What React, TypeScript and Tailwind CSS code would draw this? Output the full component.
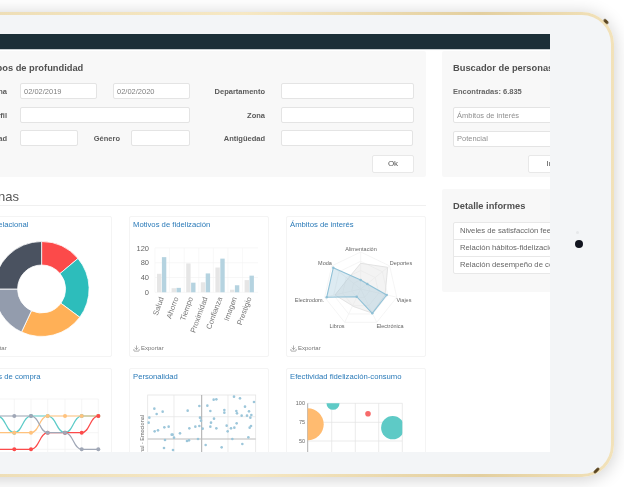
import React from 'react';
import { Download } from 'lucide-react';

const TEAL = '#2dbdbb';
const ORANGE = '#ffb057';
const RED = '#fc4a4a';
const SLATE = '#939cad';

const donut = [
  { from: 0, to: 50, color: RED },
  { from: 50, to: 126.5, color: TEAL },
  { from: 126.5, to: 205, color: ORANGE },
  { from: 205, to: 270, color: SLATE },
  { from: 270, to: 360, color: '#4a5260' },
];

const bars = [
  { name: 'Salud', a: 50, b: 95 },
  { name: 'Ahorro', a: 11, b: 12 },
  { name: 'Tiempo', a: 78, b: 26 },
  { name: 'Proximidad', a: 27, b: 51 },
  { name: 'Confianza', a: 67, b: 91 },
  { name: 'Imagen', a: 7, b: 19 },
  { name: 'Prestigio', a: 33, b: 45 },
];

const radarLabels = [
  { name: 'Alimentación', x: 361, y: 251 },
  { name: 'Deportes', x: 401, y: 265 },
  { name: 'Viajes', x: 404, y: 302 },
  { name: 'Electrónica', x: 390, y: 327.5 },
  { name: 'Libros', x: 337, y: 327.5 },
  { name: 'Electrodom.', x: 309.5, y: 302 },
  { name: 'Moda', x: 325, y: 265 },
];

const radarBlue = [[360.7, 280], [367.3, 284], [386.7, 295], [372.3, 313.3], [356.7, 296.7], [326.7, 297.3], [333.3, 267.7]];
const radarGrey = [[360.7, 263.3], [387.7, 267.3], [385, 295], [372, 313], [354, 306.7], [335, 295], [348.3, 278.3]];

const lineX = [-19.4, -2.7, 14.3, 31, 47.7, 65, 81.7, 98.3];
const LEVEL = [416, 432.7, 449.3];
const lines = [
  { color: '#5ccbc8', levels: [0, 0, 1, 0, 0, 1, 0, 0] },
  { color: '#ffc27d', levels: [1, 1, 1, 1, 0, 0, 0, 0] },
  { color: RED, levels: [2, 2, 2, 2, 1, 1, 1, 0] },
  { color: '#a0a7b6', levels: [0, 0, 0, 0, 1, 1, 2, 2] },
];

const scatter = [
  [88, 146], [95, 162], [113, 155], [73, 173], [71, 188], [89, 214], [99, 211], [118, 202], [131, 200], [140, 224],
  [143, 224], [147, 233], [165, 220], [120, 240], [117, 264], [144, 270], [188, 152], [223, 138], [247, 137], [266, 119],
  [274, 118], [256, 153], [298, 150], [298, 158], [327, 110], [345, 115], [360, 140], [334, 153], [336, 160], [372, 154],
  [379, 165], [376, 173], [366, 167], [350, 167], [387, 126], [225, 173], [228, 182], [267, 176], [258, 188], [256, 200],
  [274, 205], [305, 197], [318, 205], [328, 203], [335, 190], [308, 214], [378, 198], [374, 203], [211, 200], [223, 198],
  [193, 205], [233, 206], [186, 243], [192, 241], [219, 237], [242, 255], [290, 262], [322, 237], [352, 252], [370, 232],
];

const informes = [
  'Niveles de satisfacción feedback',
  'Relación hábitos-fidelización',
  'Relación desempeño de consumo',
];

function polar(cx: number, cy: number, r: number, deg: number) {
  const a = (deg * Math.PI) / 180;
  return [cx + r * Math.sin(a), cy - r * Math.cos(a)];
}

function slice(from: number, to: number) {
  const [x1, y1] = polar(41.6, 289, 47.5, from);
  const [x2, y2] = polar(41.6, 289, 47.5, to);
  const [x3, y3] = polar(41.6, 289, 24, to);
  const [x4, y4] = polar(41.6, 289, 24, from);
  const big = to - from > 180 ? 1 : 0;
  return `M${x1} ${y1}A47.5 47.5 0 ${big} 1 ${x2} ${y2}L${x3} ${y3}A24 24 0 ${big} 0 ${x4} ${y4}Z`;
}

function smooth(levels: number[]) {
  let d = `M${lineX[0]} ${LEVEL[levels[0]]}`;
  for (let i = 1; i < levels.length; i++) {
    const mid = (lineX[i - 1] + lineX[i]) / 2;
    d += `C${mid} ${LEVEL[levels[i - 1]]} ${mid} ${LEVEL[levels[i]]} ${lineX[i]} ${LEVEL[levels[i]]}`;
  }
  return d;
}

const toPoints = (list: number[][]) => list.map((p) => p.join(',')).join(' ');

const Field = ({ w, value, placeholder }: { w: string; value?: string; placeholder?: string }) => (
  <input
    readOnly
    value={value}
    placeholder={placeholder}
    className={`${w} block h-[16px] shrink-0 rounded-[2px] border border-[#e4e4e4] bg-white px-[3px] text-[7.5px] text-[#808080] outline-none placeholder:text-[#909090]`}
  />
);

const Label = ({ w, children }: { w: string; children: React.ReactNode }) => (
  <span className={`${w} mt-[2px] shrink-0 text-right text-[7.5px] font-bold text-[#5a5a5a]`}>{children}</span>
);

const Card = ({ title, left, children }: { title: string; left?: boolean; children: React.ReactNode }) => (
  <div className={`flex h-[141px] flex-col rounded-[2px] border border-[#f4f4f4] bg-white ${left ? 'pl-[15px]' : 'pl-[3px]'}`}>
    <h3 className="mt-[3px] text-[7.7px] leading-[10px] text-[#2a7ab8]">{title}</h3>
    {children}
    <div className="mt-auto mb-[4px] flex items-center gap-[1px] text-[6px] leading-[8px] text-[#777]">
      <Download size={7} strokeWidth={2} />
      Exportar
    </div>
  </div>
);

// el viewBox usa las coordenadas de la tarjeta, la altura es siempre 114
const ChartBox = ({ x, y, w, children }: { x: number; y: number; w: number; children: React.ReactNode }) => (
  <svg
    viewBox={`${x} ${y} ${w} 114`}
    width={w}
    height={114}
    className="block shrink-0 overflow-hidden"
    style={{ fontFamily: '"Liberation Sans", sans-serif' }}
  >
    {children}
  </svg>
);

export default function App() {
  return (
    <div className="relative h-[487px] w-[624px] overflow-hidden bg-white pt-[12px] font-['Liberation_Sans',sans-serif]">
      <div className="ml-[-60px] h-[465px] w-[674px] rounded-[32px] bg-[linear-gradient(90deg,#ecdcb4,#f6e8c4_45%,#e3cf9f_80%,#f2e2ba)] p-[3px] shadow-[0_2px_18px_rgba(0,0,0,0.2)]">
        <div className="h-full rounded-[29px] bg-[#f3f5f7] pt-[19px] pl-[17px]">
          <div className="h-[418px] w-[590px] overflow-hidden bg-white blur-[0.35px]">
            <div className="box-content h-[14.5px] border-b border-[#c7ced1] bg-[#1c2f38]" />
            <div className="mt-[1.5px] flex gap-[16px]">
              <div className="w-[466px] shrink-0">
                {/* filtros */}
                <section className="h-[126px] rounded-[2px] bg-[#f8f8f8] pt-[11px] pl-[18px]">
                  <h2 className="ml-[2px] text-[9.3px] leading-[12px] font-bold text-[#505050]">Grupos de profundidad</h2>
                  <div className="mt-[9px] flex flex-col gap-[7.5px]">
                    <div className="flex items-center">
                      <Label w="w-[29px]">Fecha</Label>
                      <div className="ml-[13px] flex w-[170px] justify-between">
                        <Field w="w-[77px]" value="02/02/2019" />
                        <Field w="w-[77px]" value="02/02/2020" />
                      </div>
                      <Label w="w-[75px]">Departamento</Label>
                      <div className="ml-[16px]"><Field w="w-[133px]" /></div>
                    </div>
                    <div className="flex items-center">
                      <Label w="w-[29px]">Perfil</Label>
                      <div className="ml-[13px] w-[170px]"><Field w="w-[170px]" /></div>
                      <Label w="w-[75px]">Zona</Label>
                      <div className="ml-[16px]"><Field w="w-[133px]" /></div>
                    </div>
                    <div className="flex items-center">
                      <Label w="w-[29px]">Edad</Label>
                      <div className="ml-[13px] flex w-[170px] items-center">
                        <Field w="w-[58px]" />
                        <Label w="w-[42px]">Género</Label>
                        <div className="ml-[11px]"><Field w="w-[59px]" /></div>
                      </div>
                      <Label w="w-[75px]">Antigüedad</Label>
                      <div className="ml-[16px]"><Field w="w-[132px]" /></div>
                    </div>
                  </div>
                  <div className="mt-[8.5px] flex justify-end pr-[12px]">
                    <button className="block h-[18px] w-[42px] rounded-[2px] border border-[#e8e8e8] bg-white text-[8px] text-[#555]">Ok</button>
                  </div>
                </section>

                <h2 className="mt-[13px] border-b border-[#f0f0f0] pb-[1px] pl-[4px] text-[13px] leading-[14px] text-[#555]">Personas</h2>

                <div className="mt-[10px] grid grid-cols-[152px_140px_140px] gap-x-[17px] gap-y-[11px]">
                  <Card title="Perfil relacional" left>
                    <ChartBox x={-24} y={230} w={135}>
                      {donut.map((s) => (
                        <path key={s.from} d={slice(s.from, s.to)} fill={s.color} stroke="#fff" strokeWidth="0.8" />
                      ))}
                    </ChartBox>
                  </Card>

                  <Card title="Motivos de fidelización">
                    <ChartBox x={133} y={230} w={135}>
                      {[247.9, 262.7, 277.5, 292.3].map((y, i) => (
                        <g key={y}>
                          <line x1="155" x2="258" y1={y} y2={y} stroke="#f2f2f2" strokeWidth="0.6" />
                          <text x="149" y={y + 2.6} textAnchor="end" fontSize="7.5" fill="#666">{120 - i * 40}</text>
                        </g>
                      ))}
                      {bars.map((b, i) => {
                        const x = 155.5 + i * 14.6;
                        return (
                          <g key={b.name}>
                            <line x1={x - 0.5} x2={x - 0.5} y1="248" y2="292.3" stroke="#f4f4f4" strokeWidth="0.6" />
                            <rect x={x + 1.5} y={292.3 - b.a * 0.37} width="4.4" height={b.a * 0.37} fill="#e6e6e6" />
                            <rect x={x + 6.4} y={292.3 - b.b * 0.37} width="4.4" height={b.b * 0.37} fill="#b5d3e0" />
                            <text
                              x={x + 8.5}
                              y="298"
                              textAnchor="end"
                              fontSize="7.5"
                              fill="#777"
                              transform={`rotate(-70 ${x + 8.5} 298)`}
                            >
                              {b.name}
                            </text>
                          </g>
                        );
                      })}
                    </ChartBox>
                  </Card>

                  <Card title="Ámbitos de interés">
                    <ChartBox x={290} y={230} w={135}>
                      {[37, 27.7, 18.5, 9.2].map((r) => (
                        <polygon
                          key={r}
                          points={toPoints([0, 1, 2, 3, 4, 5, 6].map((i) => polar(360.7, 289, r, (i * 360) / 7)))}
                          fill="none"
                          stroke="#f0f0f0"
                          strokeWidth="0.7"
                        />
                      ))}
                      {[0, 1, 2, 3, 4, 5, 6].map((i) => {
                        const [x, y] = polar(360.7, 289, 37, (i * 360) / 7);
                        return <line key={i} x1="360.7" y1="289" x2={x} y2={y} stroke="#f0f0f0" strokeWidth="0.7" />;
                      })}
                      <polygon points={toPoints(radarGrey)} fill="#dddddd" fillOpacity="0.35" stroke="#e0e0e0" strokeWidth="0.9" />
                      <polygon points={toPoints(radarBlue)} fill="#8fbdd3" fillOpacity="0.3" stroke="#8fc0d6" strokeWidth="1.1" />
                      {radarBlue.map(([x, y]) => (
                        <circle key={x} cx={x} cy={y} r="1.2" fill="#8fc0d6" />
                      ))}
                      {radarLabels.map((l) => (
                        <text key={l.name} x={l.x} y={l.y} textAnchor="middle" fontSize="5.5" fill="#666">{l.name}</text>
                      ))}
                    </ChartBox>
                  </Card>

                  <Card title="Hábitos de compra" left>
                    <ChartBox x={-24} y={382} w={135}>
                      {[399, 416, 432.7, 449.3].map((y) => (
                        <line key={y} x1="-40" x2="98.3" y1={y} y2={y} stroke="#f0f0f0" strokeWidth="0.7" />
                      ))}
                      {lineX.slice(1).map((x) => (
                        <line key={x} x1={x} x2={x} y1="399" y2="460" stroke="#f0f0f0" strokeWidth="0.7" />
                      ))}
                      {lines.map((l) => (
                        <g key={l.color}>
                          <path d={smooth(l.levels)} fill="none" stroke={l.color} strokeWidth="1.2" />
                          {l.levels.map((lv, i) => (
                            <circle key={i} cx={lineX[i]} cy={LEVEL[lv]} r="2" fill={l.color} />
                          ))}
                        </g>
                      ))}
                    </ChartBox>
                  </Card>

                  <Card title="Personalidad">
                    <ChartBox x={133} y={382} w={135}>
                      <rect x="147.7" y="395" width="108" height="70" fill="none" stroke="#e4e4e4" strokeWidth="0.8" />
                      <line x1="174" x2="174" y1="395" y2="465" stroke="#e4e4e4" strokeWidth="0.7" />
                      <line x1="228" x2="228" y1="395" y2="465" stroke="#e4e4e4" strokeWidth="0.7" />
                      <line x1="147.7" x2="255.7" y1="416.7" y2="416.7" stroke="#e4e4e4" strokeWidth="0.7" />
                      <line x1="201.7" x2="201.7" y1="395" y2="465" stroke="#aaaaaa" strokeWidth="1" />
                      <line x1="147.7" x2="255.7" y1="439" y2="439" stroke="#bbbbbb" strokeWidth="1" />
                      <text x="144" y="467" fontSize="5.5" fill="#666" transform="rotate(-90 144 467)">Racional - Emocional</text>
                      {scatter.map(([zx, zy]) => (
                        <circle key={`${zx}-${zy}`} cx={125 + zx / 3} cy={360 + zy / 3} r="1.3" fill="#9cc6da" />
                      ))}
                    </ChartBox>
                  </Card>

                  <Card title="Efectividad fidelización-consumo">
                    <ChartBox x={290} y={382} w={135}>
                      <defs>
                        <clipPath id="plot">
                          <rect x="307.7" y="403.3" width="94.6" height="60" />
                        </clipPath>
                      </defs>
                      {[403.3, 422.3, 441].map((y, i) => (
                        <g key={y}>
                          <line x1="307.7" x2="402.3" y1={y} y2={y} stroke="#e2e2e2" strokeWidth="0.7" />
                          <text x="305" y={y + 2} textAnchor="end" fontSize="5.5" fill="#666">{100 - i * 25}</text>
                        </g>
                      ))}
                      {[331.7, 355.3, 378.7, 402.3].map((x) => (
                        <line key={x} x1={x} x2={x} y1="403.3" y2="465" stroke="#e2e2e2" strokeWidth="0.7" />
                      ))}
                      <line x1="307.7" x2="307.7" y1="403.3" y2="465" stroke="#a5a5a5" strokeWidth="0.9" />
                      <g clipPath="url(#plot)">
                        <circle cx="307.7" cy="424.3" r="16" fill="#ffbb70" />
                        <circle cx="333" cy="403.3" r="6.5" fill="#5ecac6" />
                        <circle cx="368" cy="413.7" r="2.8" fill="#f76a6a" />
                        <circle cx="392.7" cy="427.7" r="11.6" fill="#5ecac6" />
                      </g>
                    </ChartBox>
                  </Card>
                </div>
              </div>

              <div className="flex w-[200px] shrink-0 flex-col gap-[12px]">
                <section className="h-[126px] rounded-[2px] bg-[#f8f8f8] pt-[11px] pl-[11px]">
                  <h2 className="text-[9.3px] leading-[12px] font-bold text-[#505050]">Buscador de personas</h2>
                  <p className="mt-[13px] text-[7.5px] leading-[10px] font-bold text-[#666]">Encontradas: 6.835</p>
                  <div className="mt-[10px] flex flex-col gap-[7.5px]">
                    <Field w="w-[170px]" placeholder="Ámbitos de interés" />
                    <Field w="w-[170px]" placeholder="Potencial" />
                  </div>
                  <button className="mt-[8.5px] ml-[75px] block h-[18px] w-[42px] rounded-[2px] border border-[#e8e8e8] bg-white text-[8px] text-[#555]">Ir</button>
                </section>
                <section className="h-[103px] rounded-[2px] bg-[#f8f8f8] pt-[11px] pl-[11px]">
                  <h2 className="text-[9.3px] leading-[12px] font-bold text-[#505050]">Detalle informes</h2>
                  <ul className="mt-[10px] w-[170px] rounded-[2px] border border-[#e8e8e8] bg-white">
                    {informes.map((t) => (
                      <li key={t} className="h-[16.8px] border-b border-[#e8e8e8] pl-[6px] text-[7.7px] leading-[16px] whitespace-nowrap text-[#666] last:border-b-0">
                        {t}
                      </li>
                    ))}
                  </ul>
                </section>
              </div>
            </div>
          </div>
        </div>
      </div>

      {/* bisel: brillos oscuros y cámara */}
      <span className="absolute top-[20px] left-[603px] h-[3px] w-[6px] rotate-45 rounded-full bg-[#5a4520] blur-[0.5px]" />
      <span className="absolute top-[469px] left-[593px] h-[3px] w-[7px] -rotate-45 rounded-full bg-[#5a4520] blur-[0.5px]" />
      <span className="absolute top-[231px] left-[576px] h-[3px] w-[3px] rounded-full bg-[#e6e8ea]" />
      <span className="absolute top-[240px] left-[575px] h-[8px] w-[8px] rounded-full bg-[#11141f]" />
    </div>
  );
}
